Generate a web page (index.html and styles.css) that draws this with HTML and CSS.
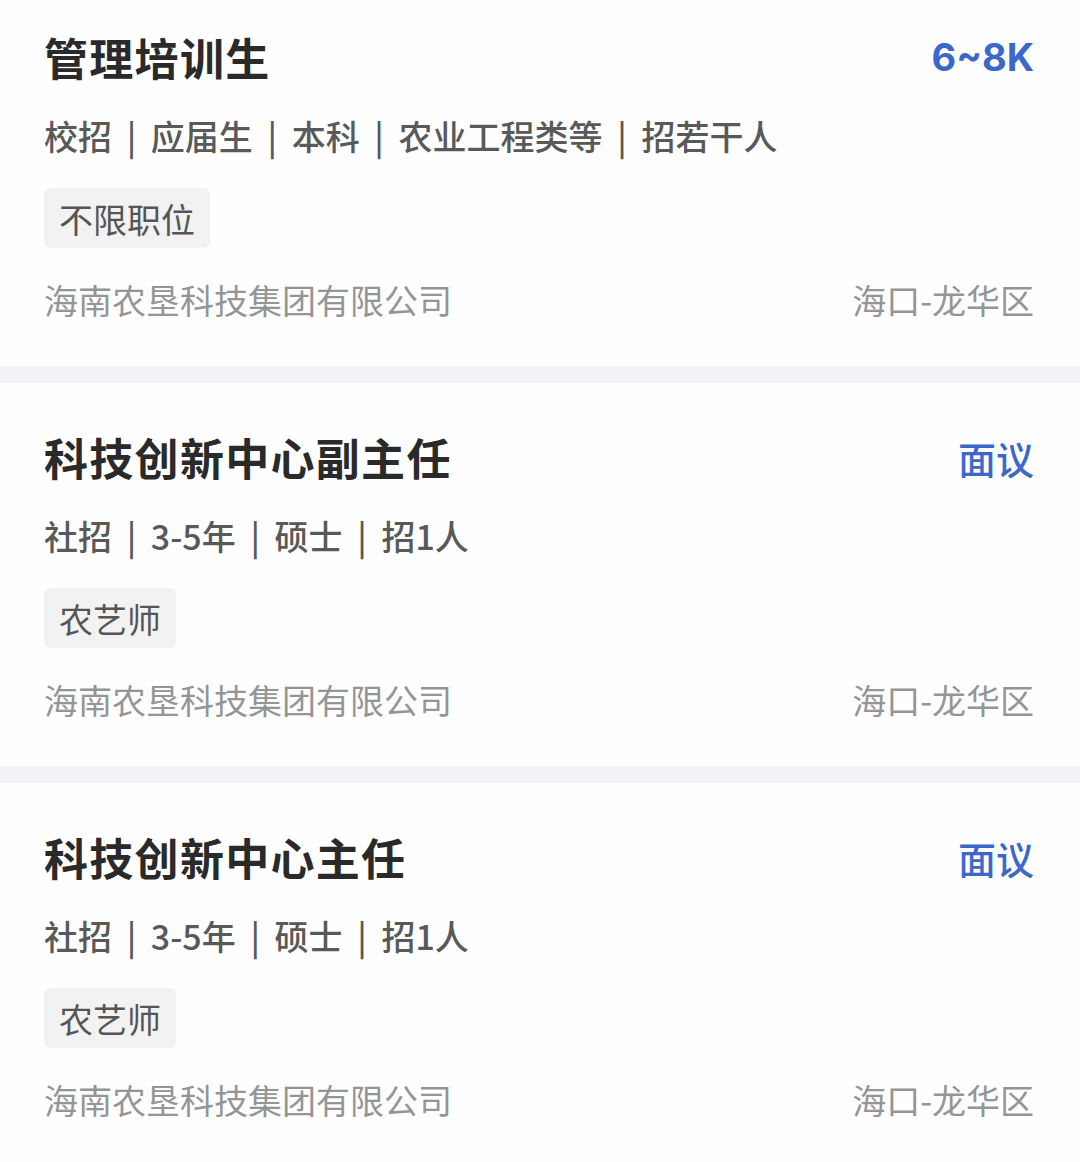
FILE: index.html
```html
<!DOCTYPE html>
<html lang="zh-CN">
<head>
    <meta charset="UTF-8">
    <meta name="viewport" content="width=device-width, initial-scale=1.0">
    <title>职位列表</title>
    <link rel="stylesheet" href="styles.css">
</head>
<body>
    <div class="job-list">
        <div class="job-card">
            <div class="job-head">
                <h2 class="job-title">管理培训生</h2>
                <span class="job-salary num">6~8K</span>
            </div>
            <p class="job-meta">校招 | 应届生 | 本科 | 农业工程类等 | 招若干人</p>
            <div class="job-tags">
                <span class="tag">不限职位</span>
            </div>
            <div class="job-foot">
                <span>海南农垦科技集团有限公司</span>
                <span>海口-龙华区</span>
            </div>
        </div>

        <div class="job-card">
            <div class="job-head">
                <h2 class="job-title">科技创新中心副主任</h2>
                <span class="job-salary">面议</span>
            </div>
            <p class="job-meta">社招 | 3-5年 | 硕士 | 招1人</p>
            <div class="job-tags">
                <span class="tag">农艺师</span>
            </div>
            <div class="job-foot">
                <span>海南农垦科技集团有限公司</span>
                <span>海口-龙华区</span>
            </div>
        </div>

        <div class="job-card">
            <div class="job-head">
                <h2 class="job-title">科技创新中心主任</h2>
                <span class="job-salary">面议</span>
            </div>
            <p class="job-meta">社招 | 3-5年 | 硕士 | 招1人</p>
            <div class="job-tags">
                <span class="tag">农艺师</span>
            </div>
            <div class="job-foot">
                <span>海南农垦科技集团有限公司</span>
                <span>海口-龙华区</span>
            </div>
        </div>
    </div>
</body>
</html>
```

FILE: styles.css
```css
* {
    margin: 0;
    padding: 0;
    box-sizing: border-box;
}

body {
    font-family: "Noto Sans CJK SC", "Noto Sans", sans-serif;
    background: #f3f3f7;
    color: #333;
    overflow: hidden;
}

.job-list {
    display: flex;
    flex-direction: column;
    gap: 17px;
}

.job-card {
    background: #fefefe;
    padding: 44px 46px 41px 44px;
}

/* 第一张卡片顶部被截掉一点 */
.job-card:first-child {
    padding-top: 27px;
}

.job-head {
    display: flex;
    justify-content: space-between;
    align-items: center;
    height: 60px;
}

.job-title {
    font-size: 44px;
    font-weight: 700;
    color: #2a2a2a;
    line-height: 60px;
    letter-spacing: 1.3px;
}

.job-salary {
    font-size: 38px;
    font-weight: 500;
    color: #3b68cc;
}

.job-salary.num {
    font-family: "Inter", "Noto Sans", sans-serif;
    font-weight: 700;
    font-size: 38px;
}

.job-meta {
    margin-top: 24px;
    font-size: 34px;
    font-weight: 500;
    line-height: 50px;
    color: #595959;
    word-spacing: 7px;
}

.job-tags {
    display: flex;
    gap: 16px;
    margin-top: 27px;
}

.tag {
    display: inline-flex;
    align-items: center;
    height: 60px;
    padding: 0 15px;
    background: #f2f2f2;
    border-radius: 6px;
    font-size: 34px;
    color: #555;
}

.job-foot {
    display: flex;
    justify-content: space-between;
    margin-top: 27px;
    font-size: 34px;
    line-height: 50px;
    color: #959595;
}
```
